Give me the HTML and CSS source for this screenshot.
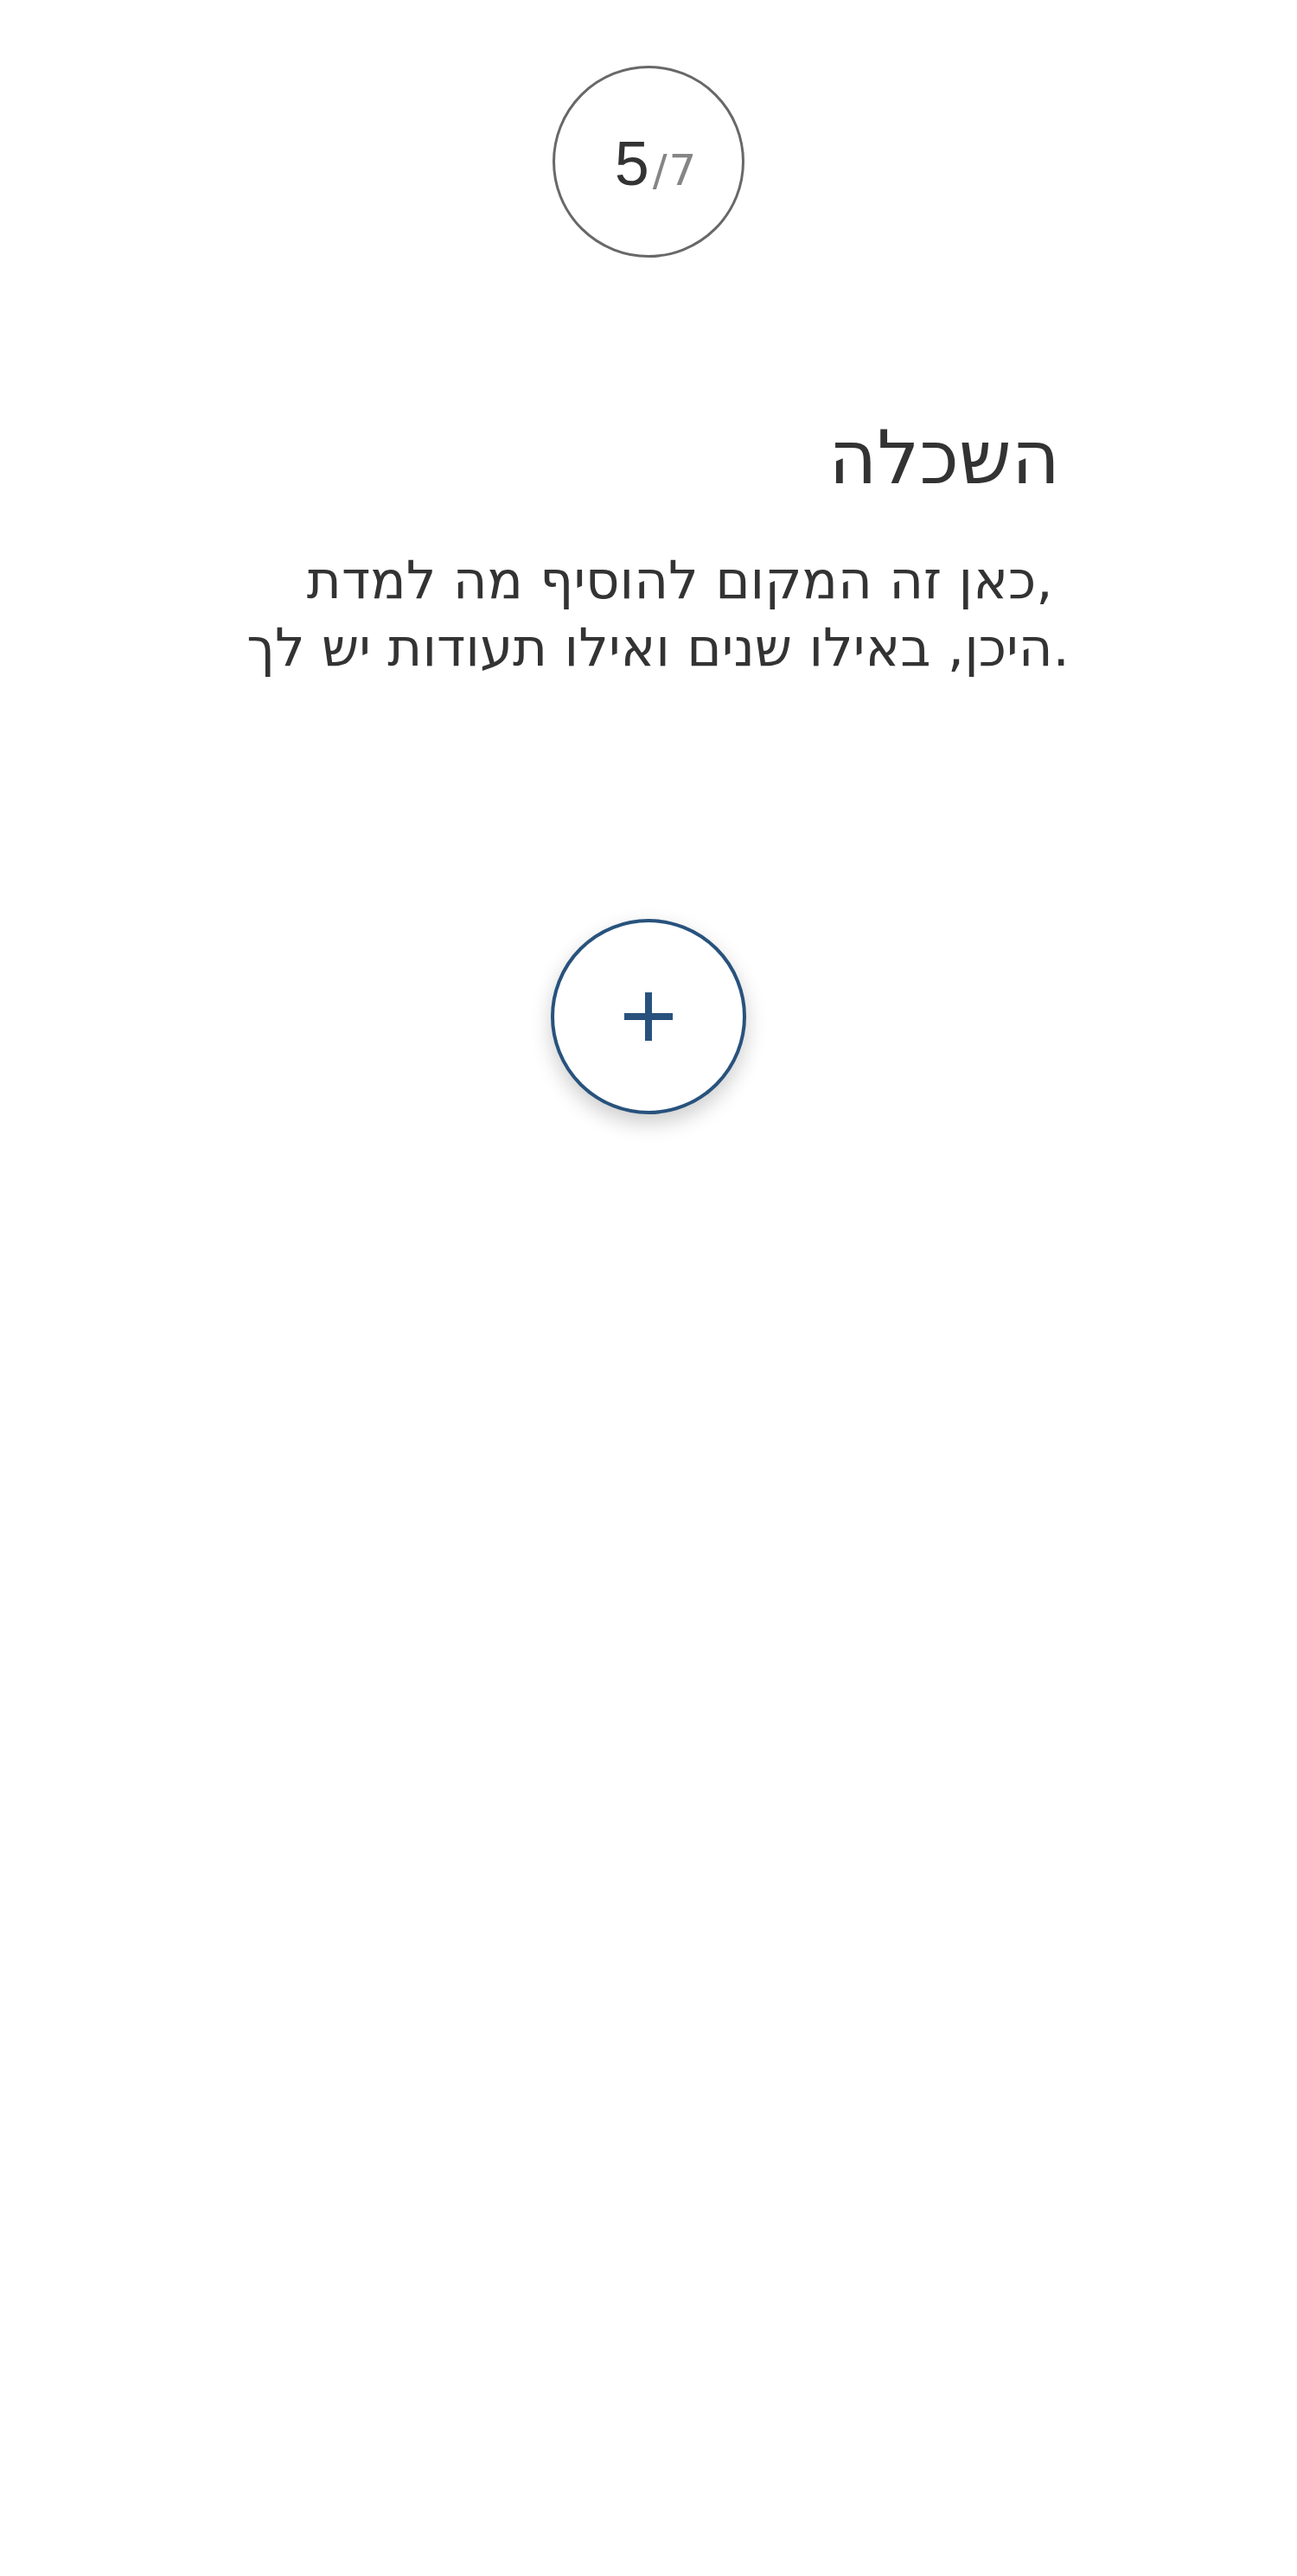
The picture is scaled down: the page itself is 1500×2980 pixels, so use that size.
FILE: index.html
```html
<!DOCTYPE html>
<html lang="he">
<head>
  <meta charset="UTF-8">
  <title>השכלה</title>
  <meta name="viewport" content="width=device-width, initial-scale=1.0">
  <link rel="stylesheet" href="styles.css">
</head>
<body>

  <main class="page">
    <div class="step">
      <span class="step-num"><span class="step-current">5</span><span class="step-total">/7</span></span>
    </div>

    <section class="intro">
      <h1>השכלה</h1>
      <p>כאן זה המקום להוסיף מה למדת, <br>היכן, באילו שנים ואילו תעודות יש לך.</p>
    </section>

    <button class="add" type="button" aria-label="הוספה">
      <svg width="56" height="56" viewBox="0 0 56 56">
        <rect x="24" y="0" width="8" height="56" fill="#28527d"/>
        <rect x="0" y="24" width="56" height="8" fill="#28527d"/>
      </svg>
    </button>
  </main>

</body>
</html>
```

FILE: styles.css
```css
body {
  margin: 0;
  padding: 0;
  background: #fff;
  color: #333;
  font-family: 'DejaVu Sans', sans-serif;
}
.page {
  display: flex;
  flex-direction: column;
  align-items: center;
  padding: 76px 0 120px;
}
.step {
  width: 216px;
  height: 216px;
  border: 3px solid #686868;
  border-radius: 50%;
  display: flex;
  align-items: center;
  justify-content: center;
}
.step-num {
  font-family: 'Liberation Sans', sans-serif;
  line-height: 1;
  padding: 4px 0 0 18px;
  white-space: nowrap;
}
.step-current {
  font-size: 72px;
  color: #333;
}
.step-total {
  font-size: 50px;
  color: #858585;
  font-family: 'DejaVu Sans', sans-serif;
  letter-spacing: 2px;
  margin-left: 4px;
}
.intro {
  width: 974px;
  margin-top: 180px;
  text-align: right;
}
.intro h1 {
  margin: 0;
  padding-right: 11px;
  font-size: 86px;
  font-weight: normal;
  line-height: 103px;
}
.intro p {
  margin: 51px 0 0;
  font-size: 61px;
  line-height: 78px;
  white-space: pre-wrap;
}
.add {
  margin-top: 275px;
  width: 226px;
  height: 226px;
  border: 4px solid #28527d;
  border-radius: 50%;
  background: #fff;
  display: flex;
  align-items: center;
  justify-content: center;
  padding: 0;
  box-shadow: 0 10px 24px rgba(0,0,0,0.2);
  cursor: pointer;
}
```
